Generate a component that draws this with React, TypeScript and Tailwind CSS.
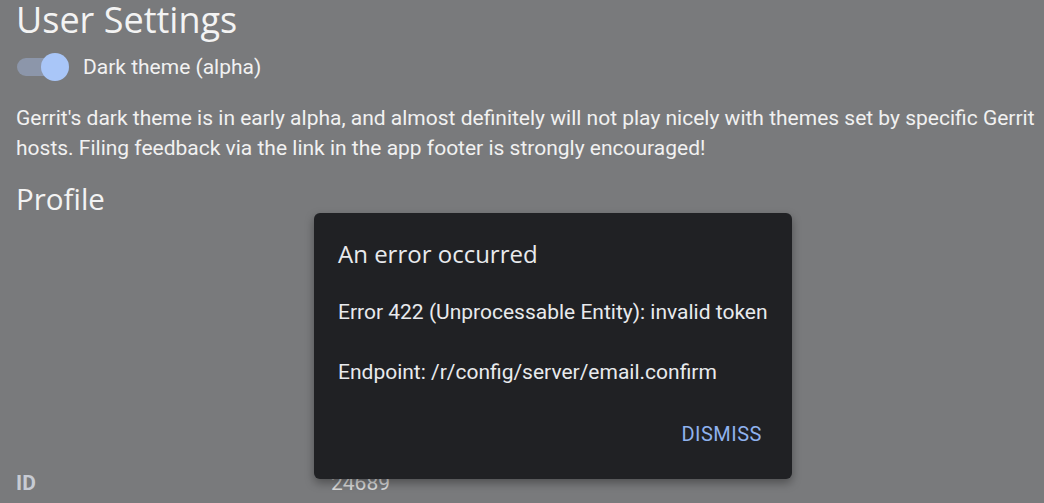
import React from "react";

export default function App() {
  return (
    <div className="relative w-[1044px] h-[503px] overflow-hidden bg-[#797a7c] text-[#f1f1f1] font-['Roboto',sans-serif]">
      <h1 className="pl-4 text-[36px] leading-[40px] font-['Open_Sans',sans-serif] font-normal text-[#f3f3f3]">
        User Settings
      </h1>
      <div className="mt-[13px] flex items-center h-[28px]">
        <div className="ml-[17px] w-[40px] h-[18px] rounded-full bg-[#8c96aa]" />
        <div className="-ml-[16px] w-[28px] h-[28px] rounded-full bg-[#a9c6f8]" />
        <span className="ml-[14px] text-[21px] leading-[28px]">Dark theme (alpha)</span>
      </div>
      <p className="mt-[22px] pl-4 pr-1 text-[21px] leading-[30px]">
        Gerrit's dark theme is in early alpha, and almost definitely will not play nicely with themes set by specific Gerrit hosts. Filing feedback via the link in the app footer is strongly encouraged!
      </p>
      <h2 className="mt-[18px] pl-4 text-[29.5px] leading-[36px] font-['Open_Sans',sans-serif] font-normal text-[#f3f3f3]">
        Profile
      </h2>
      <div className="mt-[251px] flex text-[21px] leading-[30px]">
        <span className="pl-4 w-[331px] font-bold text-[#c7cbd3]">ID</span>
        <span className="text-[#dcdcdc]">24689</span>
      </div>

      <div className="absolute left-[314px] top-[213px] w-[478px] h-[266px] rounded-[6px] bg-[#202124] shadow-[0_4px_10px_rgba(0,0,0,0.35)] flex flex-col">
        <h3 className="pt-[25px] px-6 text-[24px] leading-[32px] font-['Open_Sans',sans-serif] font-normal text-[#e8eaed]">
          An error occurred
        </h3>
        <p className="mt-[27px] px-6 text-[21px] leading-[30px] text-[#e8eaed]">
          Error 422 (Unprocessable Entity): invalid token
        </p>
        <p className="mt-[30px] px-6 text-[21px] leading-[30px] text-[#e8eaed]">
          Endpoint: /r/config/server/email.confirm
        </p>
        <div className="mt-[32px] flex justify-end pr-[30px]">
          <button className="text-[20px] leading-[30px] text-[#8fb2ee] tracking-[0.5px]">DISMISS</button>
        </div>
      </div>
    </div>
  );
}
